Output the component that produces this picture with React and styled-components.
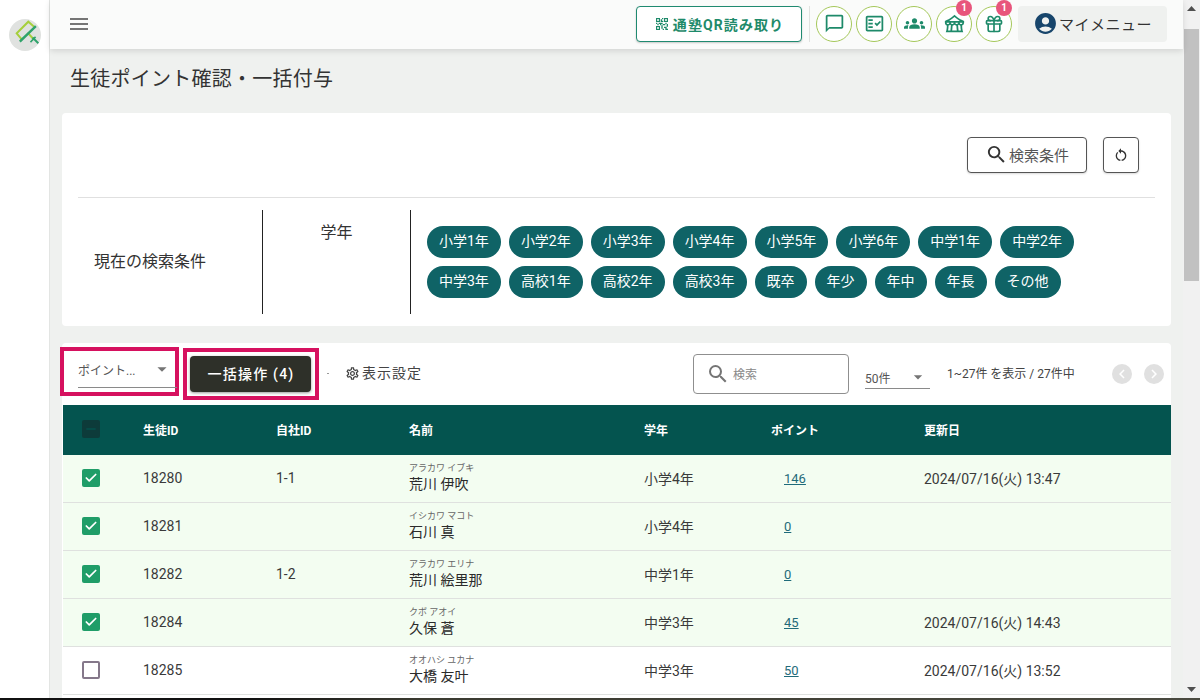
import styled, { createGlobalStyle } from 'styled-components';
import {
    MdMenu, MdQrCode2, MdChatBubbleOutline, MdOutlineFactCheck, MdGroups, MdOutlineFestival,
    MdAccountCircle, MdSearch, MdOutlineSettings, MdRestartAlt,
    MdChevronLeft, MdChevronRight, MdArrowDropDown, MdRemove,
} from 'react-icons/md';
import { Gift, Check as CheckMark } from 'lucide-react';

const GlobalStyle = createGlobalStyle`
    html, body { margin: 0; height: 100%; overflow: hidden; }
    body {
        font-family: Roboto, "Noto Sans CJK JP", sans-serif;
        color: #2b2b2b;
        background: #fff;
    }
    * { box-sizing: border-box; }
`

const Shell = styled.div`
    display: flex;
    width: 1200px;
    height: 700px;
    overflow: hidden;
    position: relative;
`
const BottomEdge = styled.div`
    position: absolute;
    left: 0;
    right: 0;
    bottom: 0;
    height: 2px;
    background: linear-gradient(90deg, #111 0, #111 250px, #3a3a30 420px, #4a4a40 100%);
    z-index: 2;
`
const Sidebar = styled.div`
    width: 50px;
    flex: none;
    background: #fff;
    border-right: 1px solid #e3e5e3;
    padding: 19px 0 0 9px;
`
const LogoBadge = styled.div`
    width: 32px;
    height: 32px;
    border-radius: 50%;
    background: #e0e2e0;
    display: flex;
`
const Main = styled.div`
    flex: 1;
    min-width: 0;
    background: #eff1ef;
    display: flex;
    flex-direction: column;
`
const Header = styled.div`
    height: 49px;
    flex: none;
    background: #fafbfa;
    box-shadow: 0 2px 6px rgba(0, 0, 0, 0.12);
    display: flex;
    align-items: center;
    padding: 0 16px 2px 17px;
    position: relative;
    z-index: 1;
`
const MenuBtn = styled.div`
    display: flex;
    color: #757575;
    font-size: 24px;
    margin-right: auto;
`
const QrBtn = styled.div`
    width: 166px;
    height: 36px;
    border: 1px solid #1f8a70;
    border-radius: 4px;
    background: #fff;
    color: #1e8a6a;
    font-size: 14px;
    font-weight: 700;
    letter-spacing: 1.1px;
    display: flex;
    align-items: center;
    justify-content: center;
    gap: 3px;
    box-shadow: 0 1px 2px rgba(0, 0, 0, 0.2);
`
const HeaderLine = styled.div`
    width: 1px;
    height: 36px;
    background: #e0e2e0;
    margin: 0 6px 0 7px;
`
const RoundBtn = styled.div`
    width: 36px;
    height: 36px;
    border: 1px solid #a5c85a;
    border-radius: 50%;
    background: #fff;
    color: #1e8a6a;
    font-size: 21px;
    display: flex;
    align-items: center;
    justify-content: center;
    margin-right: 4px;
    position: relative;
`
const Badge = styled.span`
    position: absolute;
    top: -7px;
    right: -1px;
    width: 16px;
    height: 16px;
    border-radius: 50%;
    background: #e8557c;
    color: #fff;
    font-size: 10px;
    font-weight: 700;
    line-height: 16px;
    text-align: center;
`
const MyMenu = styled.div`
    width: 149px;
    height: 36px;
    margin-left: 2px;
    border-radius: 4px;
    background: #eff1ef;
    color: #333;
    font-size: 15px;
    letter-spacing: 0.5px;
    display: flex;
    align-items: center;
    justify-content: center;
    gap: 1px;
    svg { color: #17456b; }
`
const Content = styled.div`
    flex: 1;
    padding: 0 12px;
    overflow: hidden;
`
const PageTitle = styled.h1`
    margin: 0;
    padding: 17px 0 0 8px;
    height: 64px;
    font-size: 20px;
    font-weight: 400;
    letter-spacing: 0.25px;
    line-height: 26px;
    color: #333;
`
const ConditionCard = styled.div`
    width: 1109px;
    height: 213px;
    background: #fff;
    border-radius: 4px;
    padding: 24px 16px 0;
`
const ConditionActions = styled.div`
    display: flex;
    justify-content: flex-end;
    gap: 16px;
    padding-right: 16px;
    height: 61px;
    border-bottom: 1px solid #e0e0e0;
`
const OutlineBtn = styled.div`
    height: 36px;
    width: ${(p) => p.$width}px;
    border: 1px solid #555;
    border-radius: 4px;
    background: #fff;
    color: #555;
    font-size: 15px;
    display: flex;
    align-items: center;
    justify-content: center;
    gap: 1px;
    padding-bottom: 1px;
    box-shadow: 0 1px 2px rgba(0, 0, 0, 0.15);
    svg { color: #333; }
`
const ConditionRow = styled.div`
    display: flex;
    margin-top: 12px;
    height: 104px;
`
const ConditionLabel = styled.div`
    width: 185px;
    border-right: 1px solid #222;
    padding: 0 0 4px 16px;
    display: flex;
    align-items: center;
    font-size: 16px;
    color: #333;
`
const ConditionKey = styled.div`
    width: 148px;
    border-right: 1px solid #222;
    padding-top: 13px;
    text-align: center;
    font-size: 16px;
    line-height: 20px;
    color: #333;
`
const ChipList = styled.div`
    display: flex;
    flex-wrap: wrap;
    align-content: flex-start;
    gap: 8px;
    padding: 16px 0 0 16px;
    width: 700px;
`
const Chip = styled.div`
    height: 32px;
    padding: 0 12px;
    border-radius: 16px;
    background: #0f6366;
    color: #fff;
    font-size: 14px;
    line-height: 31px;
`
const ListCard = styled.div`
    width: 1109px;
    height: 400px;
    margin-top: 17px;
    background: #fff;
    border-radius: 4px 4px 0 0;
`
const Toolbar = styled.div`
    height: 62px;
    display: flex;
    align-items: flex-start;
`
const Highlight = styled.div`
    border: 4px solid #d6115f;
    margin-top: ${(p) => p.$top}px;
    margin-left: ${(p) => p.$left}px;
    width: ${(p) => p.$width}px;
    height: ${(p) => p.$height}px;
    padding: ${(p) => p.$padding};
    flex: none;
`
const PointSelect = styled.div`
    height: 37px;
    border-bottom: 1px solid #8a8a8a;
    display: flex;
    align-items: center;
    justify-content: space-between;
    font-size: 12px;
    color: #555;
    margin-right: -2px;
    svg { color: #757575; margin-right: 4px; }
`
const BulkBtn = styled.div`
    width: 121px;
    height: 36px;
    background: #2e3029;
    border-radius: 4px;
    color: #fff;
    font-size: 14px;
    font-weight: 500;
    letter-spacing: 1.2px;
    display: flex;
    align-items: center;
    justify-content: center;
    padding: 0 0 2px 1px;
    box-shadow: 0 1px 3px rgba(0, 0, 0, 0.4);
`
const TinyDot = styled.span`
    width: 2px;
    height: 1px;
    margin: 30px 0 0 8px;
    background: #999;
    flex: none;
`
const ViewSettings = styled.div`
    margin: 20px 0 0 16px;
    display: flex;
    align-items: center;
    gap: 2px;
    font-size: 14px;
    letter-spacing: 1px;
    line-height: 20px;
    color: #444;
    width: 78px;
    flex: none;
    white-space: nowrap;
`
const SearchBox = styled.div`
    margin: 11px 0 0 270px;
    width: 156px;
    height: 40px;
    border: 1px solid #8f8f8f;
    border-radius: 4px;
    display: flex;
    align-items: center;
    padding-left: 12px;
    gap: 3px;
    color: #888;
    font-size: 12px;
    flex: none;
    svg { color: #757575; }
`
const SearchHint = styled.span`
    margin-top: -2px;
`
const PageSizeSelect = styled.div`
    margin: 17px 0 0 16px;
    width: 65px;
    height: 29px;
    border-bottom: 1px solid #8a8a8a;
    display: flex;
    align-items: center;
    justify-content: space-between;
    padding-top: 6px;
    font-size: 12px;
    color: #555;
    flex: none;
    svg { color: #757575; margin-right: 2px; }
`
const RangeText = styled.div`
    margin: 22px 0 0 17px;
    width: 165px;
    font-size: 12px;
    line-height: 18px;
    color: #444;
    flex: none;
`
const PagerBtn = styled.div`
    width: 20px;
    height: 20px;
    margin-top: 21px;
    margin-right: 12px;
    border-radius: 50%;
    background: #e0e0e0;
    color: #fff;
    font-size: 18px;
    display: flex;
    align-items: center;
    justify-content: center;
    flex: none;
`
const TableGrid = styled.div`
    display: grid;
    grid-template-columns: 80px 133px 133px 235px 127px 153px 1fr;
    align-items: center;
    margin-left: 1px;
`
const HeadRow = styled(TableGrid)`
    height: 50px;
    padding-bottom: 2px;
    background: #04544f;
    color: #fff;
    font-size: 12px;
    font-weight: 700;
`
const BodyRow = styled(TableGrid)`
    height: 48px;
    padding-bottom: 2px;
    background: ${(p) => (p.$selected ? '#f3fdf1' : '#fff')};
    border-bottom: 1px solid #dfe1df;
    font-size: 14px;
    color: #3a3a3a;
`
const CheckCell = styled.div`
    padding-left: 19px;
    display: flex;
`
const Check = styled.div`
    width: 18px;
    height: 18px;
    border-radius: 2px;
    background: ${(p) => (p.$state === 'on' ? '#1f9d68' : p.$state === 'mixed' ? '#0d3b3a' : '#fff')};
    border: ${(p) => (p.$state === 'off' ? '2px solid #85788a' : 'none')};
    color: ${(p) => (p.$state === 'on' ? '#fff' : '#04544f')};
    font-size: 16px;
    display: flex;
    align-items: center;
    justify-content: center;
`
const NameCell = styled.div`
    display: flex;
    flex-direction: column;
    margin-top: 1px;
`
const Kana = styled.span`
    font-size: 9px;
    line-height: 11px;
    color: #666;
`
const FullName = styled.span`
    font-size: 14px;
    line-height: 20px;
    color: #2b2b2b;
`
const PointLink = styled.a`
    margin-left: 13px;
    font-size: 13px;
    color: #1f6b7a;
    text-decoration: underline;
`
const ScrollTrack = styled.div`
    width: 17px;
    flex: none;
    height: 698px;
    background: #f1f1f1;
    display: flex;
    flex-direction: column;
    align-items: center;
`
const ScrollArrow = styled.div`
    height: 17px;
    display: flex;
    align-items: center;
    svg { display: block; }
`
const ScrollThumb = styled.div`
    width: 15px;
    height: 252px;
    margin-top: 12px;
    margin-bottom: auto;
    background: #c1c1c1;
`

const grades = [
    '小学1年', '小学2年', '小学3年', '小学4年', '小学5年', '小学6年', '中学1年', '中学2年',
    '中学3年', '高校1年', '高校2年', '高校3年', '既卒', '年少', '年中', '年長', 'その他',
];

const students = [
    { id: '18280', own: '1-1', kana: 'アラカワ イブキ', name: '荒川 伊吹', grade: '小学4年', point: 146, date: '2024/07/16(火) 13:47', on: true },
    { id: '18281', own: '', kana: 'イシカワ マコト', name: '石川 真', grade: '小学4年', point: 0, date: '', on: true },
    { id: '18282', own: '1-2', kana: 'アラカワ エリナ', name: '荒川 絵里那', grade: '中学1年', point: 0, date: '', on: true },
    { id: '18284', own: '', kana: 'クボ アオイ', name: '久保 蒼', grade: '中学3年', point: 45, date: '2024/07/16(火) 14:43', on: true },
    { id: '18285', own: '', kana: 'オオハシ ユカナ', name: '大橋 友叶', grade: '中学3年', point: 50, date: '2024/07/16(火) 13:52', on: false },
];

function Logo() {
    return (
        <svg width="32" height="32" viewBox="0 0 32 32" fill="none" strokeWidth="2" strokeLinecap="square">
            <path d="M24.3 7 L19.3 2.7 L7.7 14.3 L12.7 20.3" stroke="#a5cf3c" />
            <path d="M19.3 14.3 L23.5 19" stroke="#a5cf3c" />
            <path d="M11.7 21.7 L26 8" stroke="#2fa36b" strokeWidth="2.4" />
            <path d="M24.3 19.3 L28.6 23.5" stroke="#2fa36b" />
            <path d="M22 22.5 L26 18.5" stroke="#2fa36b" strokeWidth="1.6" />
        </svg>
    );
}

export default function App() {
    return (
        <Shell>
            <GlobalStyle />
            <Sidebar>
                <LogoBadge><Logo /></LogoBadge>
            </Sidebar>
            <Main>
                <Header>
                    <MenuBtn><MdMenu /></MenuBtn>
                    <QrBtn><MdQrCode2 size={16} />通塾QR読み取り</QrBtn>
                    <HeaderLine />
                    <RoundBtn><MdChatBubbleOutline /></RoundBtn>
                    <RoundBtn><MdOutlineFactCheck /></RoundBtn>
                    <RoundBtn><MdGroups /></RoundBtn>
                    <RoundBtn><MdOutlineFestival /><Badge>1</Badge></RoundBtn>
                    <RoundBtn><Gift size={20} strokeWidth={2} /><Badge>1</Badge></RoundBtn>
                    <MyMenu><MdAccountCircle size={25} />マイメニュー</MyMenu>
                </Header>
                <Content>
                    <PageTitle>生徒ポイント確認・一括付与</PageTitle>
                    <ConditionCard>
                        <ConditionActions>
                            <OutlineBtn $width={120}><MdSearch size={23} />検索条件</OutlineBtn>
                            <OutlineBtn $width={36}><MdRestartAlt size={16} /></OutlineBtn>
                        </ConditionActions>
                        <ConditionRow>
                            <ConditionLabel>現在の検索条件</ConditionLabel>
                            <ConditionKey>学年</ConditionKey>
                            <ChipList>
                                {grades.map((g) => <Chip key={g}>{g}</Chip>)}
                            </ChipList>
                        </ConditionRow>
                    </ConditionCard>
                    <ListCard>
                        <Toolbar>
                            <Highlight $top={4} $left={-2} $width={119} $height={49} $padding="0 0 0 14px">
                                <PointSelect>ポイント...<MdArrowDropDown size={22} /></PointSelect>
                            </Highlight>
                            <Highlight $top={5} $left={4} $width={136} $height={52} $padding="4px 0 0 3px">
                                <BulkBtn>一括操作 (4)</BulkBtn>
                            </Highlight>
                            <TinyDot />
                            <ViewSettings><MdOutlineSettings size={15} />表示設定</ViewSettings>
                            <SearchBox><MdSearch size={24} /><SearchHint>検索</SearchHint></SearchBox>
                            <PageSizeSelect>50件<MdArrowDropDown size={20} /></PageSizeSelect>
                            <RangeText>1~27件 を表示 / 27件中</RangeText>
                            <PagerBtn><MdChevronLeft /></PagerBtn>
                            <PagerBtn><MdChevronRight /></PagerBtn>
                        </Toolbar>
                        <HeadRow>
                            <CheckCell><Check $state="mixed"><MdRemove /></Check></CheckCell>
                            <div>生徒ID</div>
                            <div>自社ID</div>
                            <div>名前</div>
                            <div>学年</div>
                            <div>ポイント</div>
                            <div>更新日</div>
                        </HeadRow>
                        {students.map((s) => (
                            <BodyRow key={s.id} $selected={s.on}>
                                <CheckCell>
                                    <Check $state={s.on ? 'on' : 'off'}>
                                        {s.on && <CheckMark size={14} strokeWidth={3} />}
                                    </Check>
                                </CheckCell>
                                <div>{s.id}</div>
                                <div>{s.own}</div>
                                <NameCell>
                                    <Kana>{s.kana}</Kana>
                                    <FullName>{s.name}</FullName>
                                </NameCell>
                                <div>{s.grade}</div>
                                <div><PointLink>{s.point}</PointLink></div>
                                <div>{s.date}</div>
                            </BodyRow>
                        ))}
                    </ListCard>
                </Content>
            </Main>
            <ScrollTrack>
                <ScrollArrow>
                    <svg width="9" height="5" viewBox="0 0 9 5"><path d="M4.5 0 L9 5 H0 Z" fill="#505050" /></svg>
                </ScrollArrow>
                <ScrollThumb />
                <ScrollArrow>
                    <svg width="9" height="5" viewBox="0 0 9 5"><path d="M0 0 H9 L4.5 5 Z" fill="#505050" /></svg>
                </ScrollArrow>
            </ScrollTrack>
            <BottomEdge />
        </Shell>
    );
}
